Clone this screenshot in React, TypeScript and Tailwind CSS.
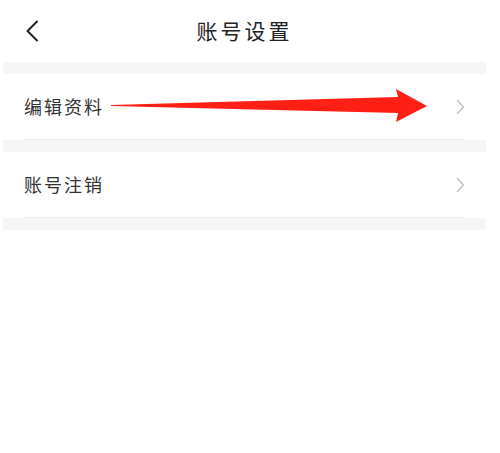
import { Fragment } from 'react'

const rows = ['编辑资料', '账号注销']

function Chevron() {
  return (
    <svg width="9" height="16" viewBox="0 0 9 16" fill="none">
      <path d="M1.5 1.5 L7.5 8 L1.5 14.5" stroke="#bdbdbd" strokeWidth="1.3" strokeLinecap="round" strokeLinejoin="round" />
    </svg>
  )
}

export default function App() {
  return (
    <div
      className="relative h-[453px] w-[500px] overflow-hidden bg-white"
      style={{ fontFamily: '"Noto Sans CJK SC", "Noto Sans", sans-serif' }}
    >
      <div className="ml-[3px] w-[483px]">
        <header className="relative flex h-[62px] items-center pl-[22px]">
          <svg width="14" height="22" viewBox="0 0 14 22" fill="none">
            <path d="M12 1.5 L2.5 11 L12 20.5" stroke="#222" strokeWidth="2" strokeLinecap="round" strokeLinejoin="round" />
          </svg>
          <h1 className="absolute inset-x-0 top-[15px] text-center text-[21px] leading-[30px] tracking-[3px] text-[#222]">
            账号设置
          </h1>
        </header>

        <div className="h-[12px] bg-[#f6f6f6]" />
        {rows.map(label => (
          <Fragment key={label}>
            <div className="px-[21px]">
              <div className="flex h-[66px] items-center justify-between border-b border-[#ececec]">
                <span className="text-[18px] tracking-[2px] text-[#333]">{label}</span>
                <Chevron />
              </div>
            </div>
            <div className="h-[12px] bg-[#f6f6f6]" />
          </Fragment>
        ))}
      </div>

      {/* annotation arrow */}
      <svg className="pointer-events-none absolute left-0 top-0" width="500" height="453">
        <polygon points="111,105 398,97 396,89 427,106 396,122 398,113 111,106" fill="#ff1f14" />
      </svg>
    </div>
  )
}
